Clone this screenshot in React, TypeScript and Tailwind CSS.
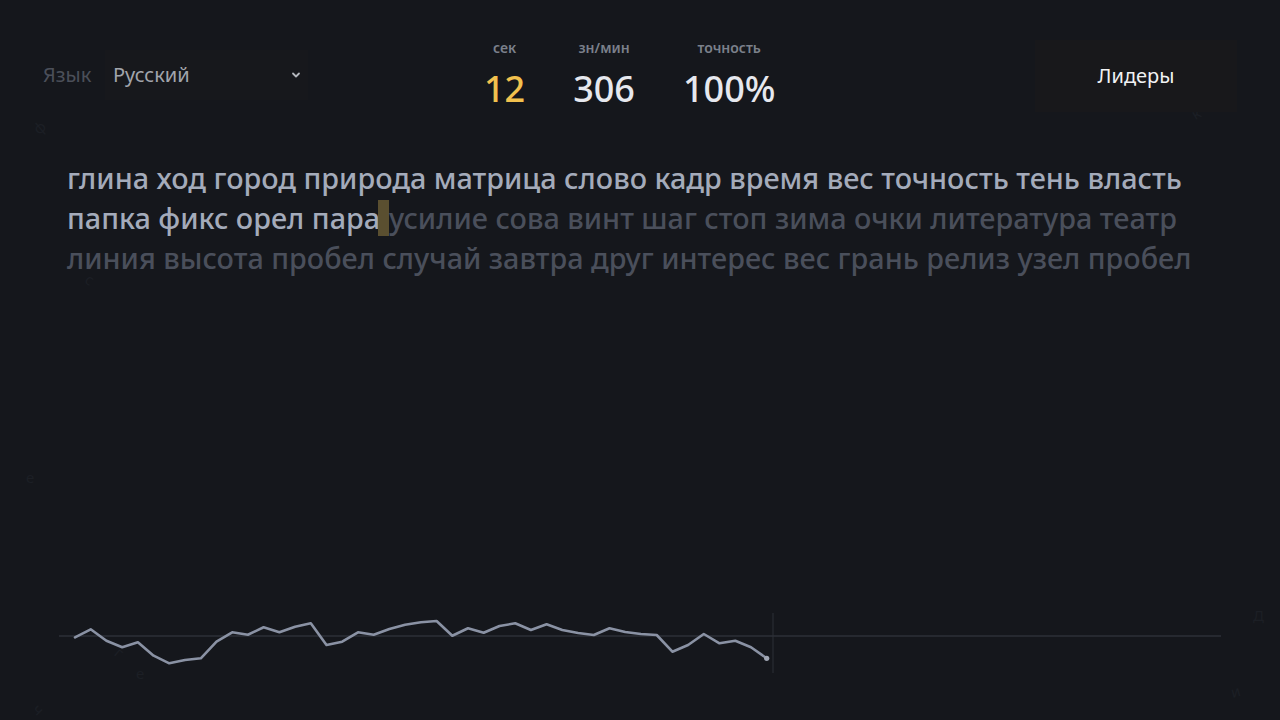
import React from "react";

const typed1 = "глина ход город природа матрица слово кадр время вес точность тень власть";
const typed2 = "папка фикс орел пара";
const rest2 = "усилие сова винт шаг стоп зима очки литература театр";
const line3 = "линия высота пробел случай завтра друг интерес вес грань релиз узел пробел";

// speed samples (y in chart coordinates, px from top of the 60px chart box)
const samples = [
  24.3, 16.3, 27.7, 34.3, 29.3, 42.7, 50.3, 47, 45.3, 28.7, 19.3, 21.7, 14.3, 19.3, 13.7,
  10.3, 32, 28.7, 19.3, 21.7, 16, 11.7, 9.3, 8, 22.7, 15.3, 19.7, 13, 10.3, 17, 11.3, 17,
  20, 22, 15.3, 19, 21, 22, 38.7, 32, 21, 30.3, 27.7, 34.3, 45.3,
];

const floating: { ch: string; x: number; y: number; r: number }[] = [
  { ch: "ф", x: 34, y: 120, r: -40 },
  { ch: "о", x: 1178, y: 80, r: 20 },
  { ch: "к", x: 1192, y: 106, r: -30 },
  { ch: "е", x: 26, y: 470, r: 0 },
  { ch: "с", x: 86, y: 272, r: 30 },
  { ch: "г", x: 116, y: 645, r: 40 },
  { ch: "е", x: 136, y: 666, r: 0 },
  { ch: "Д", x: 1253, y: 608, r: 0 },
  { ch: "и", x: 1231, y: 684, r: -15 },
  { ch: "ч", x: 34, y: 702, r: 45 },
];

function Chart() {
  const step = (766.7 - 75) / (samples.length - 1);
  const pts = samples.map((y, i) => [16 + i * step, y] as const);
  const d = pts.map(([x, y], i) => `${i ? "L" : "M"}${x.toFixed(1)} ${y}`).join(" ");
  const last = pts[pts.length - 1];
  return (
    <svg width={1162} height={60} viewBox="0 0 1162 60" className="block">
      <line x1={0} y1={23} x2={1162} y2={23} stroke="#383c45" strokeWidth={1} />
      <line x1={714} y1={0} x2={714} y2={60} stroke="#2c3037" strokeWidth={1} />
      <path d={d} fill="none" stroke="#8a92a4" strokeWidth={2.6} strokeLinejoin="round" strokeLinecap="round" />
      <circle cx={last[0]} cy={last[1]} r={2.6} fill="#a0a6b3" />
    </svg>
  );
}

function Stat({ label, value, tone }: { label: string; value: string; tone: string }) {
  return (
    <div className="flex flex-col items-center">
      <div className="text-[14px] leading-[16px] font-semibold text-[#7b808b]">{label}</div>
      <div className={`mt-[13px] text-[36px] leading-[40px] font-medium ${tone}`}>{value}</div>
    </div>
  );
}

export default function App() {
  return (
    <div className="relative flex h-screen w-full flex-col overflow-hidden bg-[#15171c] font-['Noto_Sans','Open_Sans',sans-serif]">
      {floating.map((f, i) => (
        <span
          key={i}
          className="pointer-events-none absolute text-[15px] leading-none text-[#1c1f25]"
          style={{ left: f.x, top: f.y, transform: `rotate(${f.r}deg)` }}
        >
          {f.ch}
        </span>
      ))}

      <header className="relative flex items-start px-[43px] pt-[40px]">
        <div className="mt-[10px] flex w-[441px] items-center">
          <span className="w-[62px] text-[20px] text-[#4b4f59]">Язык</span>
          <div className="flex h-[50px] w-[203px] items-center justify-between bg-[#17181c] pl-[8px] pr-[6px]">
            <span className="text-[20px] text-[#a2a5ac]">Русский</span>
            <svg width="12" height="12" viewBox="0 0 12 12" className="text-[#b4b7bd]">
              <path d="M3 4.5 6 7.5 9 4.5" fill="none" stroke="currentColor" strokeWidth="1.8" strokeLinecap="round" strokeLinejoin="round" />
            </svg>
          </div>
        </div>

        <div className="flex gap-[48px]">
          <Stat label="сек" value="12" tone="text-[#f2c14e]" />
          <Stat label="зн/мин" value="306" tone="text-[#e6e8ee]" />
          <Stat label="точность" value="100%" tone="text-[#e6e8ee]" />
        </div>

        <button className="ml-auto h-[72px] w-[202px] bg-[#18181b] text-[20px] text-[#f1f2f4]">
          Лидеры
        </button>
      </header>

      <main className="relative mt-[46px] px-[67px] text-[28.8px] leading-[40px] font-medium">
        <div className="whitespace-nowrap text-[#a4abba]">{typed1}</div>
        <div className="flex items-center whitespace-nowrap">
          <span className="text-[#a4abba]">{typed2}</span>
          <span className="-ml-[2px] inline-block h-[36px] w-[11px] bg-[#5a4f30]" />
          <span className="text-[#4a4f5b]">{rest2}</span>
        </div>
        <div className="whitespace-nowrap text-[#4a4f5b]">{line3}</div>
      </main>

      <footer className="relative mt-auto px-[59px] pb-[47px]">
        <Chart />
      </footer>
    </div>
  );
}
